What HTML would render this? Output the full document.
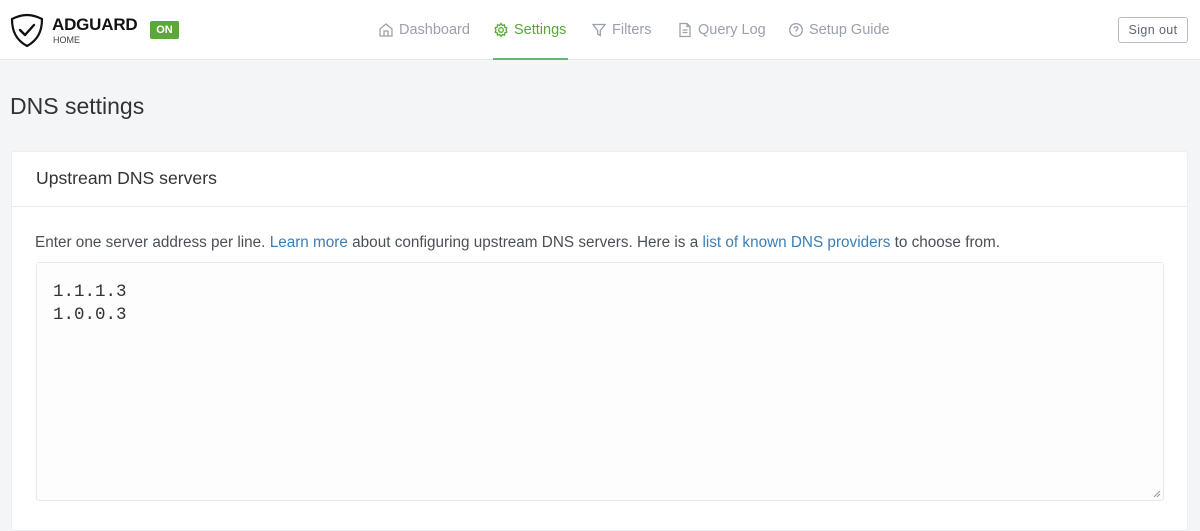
<!DOCTYPE html>
<html><head><meta charset="utf-8"><style>
*{box-sizing:border-box;margin:0;padding:0}
body{width:1200px;height:513px;overflow:hidden;background:#f4f5f7;font-family:"Liberation Sans",sans-serif;color:#495057;position:relative}
.hdr{position:absolute;left:0;top:0;width:1200px;height:60px;background:#fff;border-bottom:1px solid #e6e7ea}
.logo{position:absolute;left:10px;top:13px}
.brand{position:absolute;left:52px;top:15px;font-weight:bold;font-size:17px;color:#111;letter-spacing:-0.2px}
.home{position:absolute;left:53px;top:35px;font-size:9px;color:#444}
.on{position:absolute;left:150px;top:21px;width:29px;height:18px;background:#5aa73a;color:#fff;font-size:11px;font-weight:bold;text-align:center;line-height:18px;border-radius:2px}
.nav{position:absolute;top:22px;font-size:14.5px;color:#9aa0ac;display:flex;align-items:center;gap:5px}
.nav svg{width:16px;height:16px}
.act{color:#5aa73a}
.uline{position:absolute;left:493px;top:58px;width:75px;height:2px;background:#66b574}
.so{position:absolute;left:1118px;top:17px;width:70px;height:26px;border:1px solid #b8bcc4;border-radius:3px;font-size:12.5px;font-weight:normal;color:#5e6677;text-align:center;line-height:24px;letter-spacing:.4px}
h1{position:absolute;left:10px;top:93px;font-size:23px;font-weight:normal;color:#333}
.card{position:absolute;left:11px;top:151px;width:1177px;height:380px;background:#fff;border:1px solid #eceef1;border-radius:3px}
.ch{height:55px;border-bottom:1px solid #e9ebee;padding:16px 0 0 24px;font-size:17.6px;color:#333}
.desc{position:absolute;left:23px;top:82px;font-size:15.3px;color:#495057;white-space:nowrap}
.desc a{color:#3a7fb8;text-decoration:none}
.ta{position:absolute;left:24px;top:110px;width:1128px;height:239px;border:1px solid #e6e8eb;border-radius:3px;background:#fdfdfd;padding:18px 0 0 16px;font-family:"Liberation Mono",monospace;font-size:17.5px;line-height:23px;color:#333}
.grip{position:absolute;right:2px;bottom:2px}
</style></head><body>
<div class="hdr">
<svg class="logo" width="34" height="34" viewBox="0 0 34 34"><path d="M17 2 C11 2 6 4 2 6 C2 18 6 27 17 33 C28 27 32 18 32 6 C28 4 23 2 17 2Z" fill="none" stroke="#111" stroke-width="2.2" stroke-linejoin="round"/><path d="M10 17 L15 22 L24 12" fill="none" stroke="#111" stroke-width="2.4" stroke-linecap="round" stroke-linejoin="round"/></svg>
<div class="brand">ADGUARD</div><div class="home">HOME</div>
<div class="on">ON</div>
<div class="nav" style="left:378px"><svg viewBox="0 0 16 16" fill="none" stroke="#9aa0ac" stroke-width="1.3"><path d="M2 7 L8 2 L14 7 V14 H2Z M6 14 V9 H10 V14"/></svg>Dashboard</div>
<div class="nav act" style="left:493px"><svg viewBox="0 0 16 16" fill="none" stroke="#5aa73a" stroke-width="1.3"><circle cx="8" cy="8" r="2.3"/><path d="M8 1.5 L9.3 3.4 L11.5 2.9 L11.8 5.1 L13.9 5.9 L13 8 L13.9 10.1 L11.8 10.9 L11.5 13.1 L9.3 12.6 L8 14.5 L6.7 12.6 L4.5 13.1 L4.2 10.9 L2.1 10.1 L3 8 L2.1 5.9 L4.2 5.1 L4.5 2.9 L6.7 3.4Z"/></svg>Settings</div>
<div class="nav" style="left:591px"><svg viewBox="0 0 16 16" fill="none" stroke="#9aa0ac" stroke-width="1.3"><path d="M2 2.5 H14 L9.3 8.5 V13.5 L6.7 12 V8.5Z"/></svg>Filters</div>
<div class="nav" style="left:677px"><svg viewBox="0 0 16 16" fill="none" stroke="#9aa0ac" stroke-width="1.3"><path d="M3 1.5 H10 L13 4.5 V14.5 H3Z M10 1.5 V4.5 H13 M5.5 8 H10.5 M5.5 10.5 H10.5"/></svg>Query Log</div>
<div class="nav" style="left:788px"><svg viewBox="0 0 16 16" fill="none" stroke="#9aa0ac" stroke-width="1.3"><circle cx="8" cy="8" r="6.3"/><path d="M6 6.3 C6 4.2 10 4.2 10 6.3 C10 7.8 8 7.8 8 9.5 M8 11.2 V11.8"/></svg>Setup Guide</div>
<div class="uline"></div>
<div class="so">Sign out</div>
</div>
<h1>DNS settings</h1>
<div class="card">
<div class="ch">Upstream DNS servers</div>
<div class="desc">Enter one server address per line. <a>Learn more</a> about configuring upstream DNS servers. Here is a <a>list of known DNS providers</a> to choose from.</div>
<div class="ta">1.1.1.3<br>1.0.0.3
<svg class="grip" width="8" height="8" viewBox="0 0 8 8" stroke="#999" stroke-width="1"><path d="M1 7 L7 1 M4 7 L7 4"/></svg></div>
</div>
</body></html>
